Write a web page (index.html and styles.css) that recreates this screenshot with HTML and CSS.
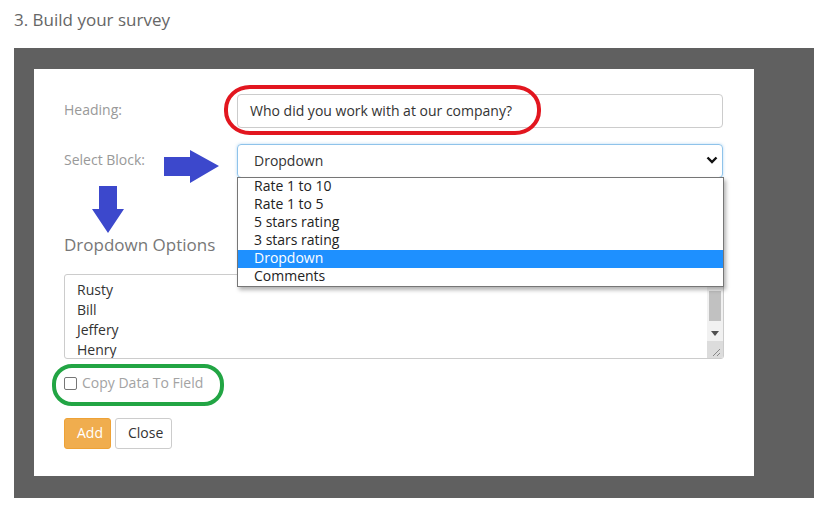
FILE: index.html
```html
<!DOCTYPE html>
<html>
<head>
<meta charset="utf-8">
<link rel="stylesheet" href="styles.css">
</head>
<body>
<div class="title">3. Build your survey</div>
<div class="backdrop">
  <div class="modal">
    <div class="row">
      <label class="lbl">Heading:</label>
      <div class="control input">Who did you work with at our company?</div>
    </div>
    <div class="row row-select">
      <label class="lbl">Select Block:</label>
      <div class="select-wrap">
        <div class="control select">
          <span>Dropdown</span>
          <svg class="chev" width="12" height="8" viewBox="0 0 12 8"><path d="M1.5 1.5 L6 6 L10.5 1.5" fill="none" stroke="#111" stroke-width="2.4"/></svg>
        </div>
        <ul class="list">
          <li>Rate 1 to 10</li>
          <li>Rate 1 to 5</li>
          <li>5 stars rating</li>
          <li>3 stars rating</li>
          <li class="sel">Dropdown</li>
          <li>Comments</li>
        </ul>
      </div>
    </div>
    <h4 class="sub">Dropdown Options</h4>
    <div class="textarea">
      <div class="lines">
        <div>Rusty</div>
        <div>Bill</div>
        <div>Jeffery</div>
        <div>Henry</div>
      </div>
      <div class="sb">
        <div class="sb-up"></div>
        <div class="sb-thumb"></div>
        <div class="sb-space"></div>
        <div class="sb-down"><svg width="8" height="5" viewBox="0 0 8 5"><path d="M0 0 H8 L4 5 Z" fill="#505050"/></svg></div>
        <div class="sb-corner"><svg width="15" height="15" viewBox="0 0 15 15"><path d="M13 6 L6 13 M13 10 L10 13" stroke="#888" stroke-width="1"/></svg></div>
      </div>
    </div>
    <div class="check-row">
      <span class="box"></span>
      <span class="check-lbl">Copy Data To Field</span>
    </div>
    <div class="btns">
      <button class="btn btn-add">Add</button>
      <button class="btn btn-close">Close</button>
    </div>

    <div class="mark mark-red"></div>
    <div class="mark mark-green"></div>
    <svg class="arrow arrow-right" width="58" height="36" viewBox="0 0 58 36"><path d="M1 8 H27 V1 L56 17 L27 34 V27 H1 Z" fill="#3c48cc"/></svg>
    <svg class="arrow arrow-down" width="34" height="49" viewBox="0 0 34 49"><path d="M8 1 H26 V24 H33 L17 48 L1 24 H8 Z" fill="#3c48cc"/></svg>
  </div>
</div>
</body>
</html>
```
FILE: styles.css
```css
* { box-sizing: border-box; }
body {
  margin: 0;
  background: #fff;
  font-family: "Open Sans", "Noto Sans", sans-serif;
  font-size: 14px;
  color: #333;
}
.title {
  height: 48px;
  padding: 9px 0 0 14px;
  font-size: 17px;
  color: #666;
  line-height: 22px;
}
.backdrop {
  margin-left: 14px;
  width: 800px;
  height: 450px;
  background: #606060;
  padding: 21px 60px 22px 20px;
}
.modal {
  position: relative;
  background: #fff;
  height: 407px;
  padding: 25px 31px 0 30px;
}
.row {
  display: flex;
  align-items: center;
}
.row-select { margin-top: 16px; }
.lbl {
  width: 173px;
  color: #999;
  font-size: 14px;
  line-height: 18px;
  padding-bottom: 3px;
}
.control {
  flex: 1;
  height: 34px;
  border: 1px solid #ccc;
  border-radius: 4px;
  padding: 0 12px 2px;
  display: flex;
  align-items: center;
  color: #333;
}
.select-wrap {
  flex: 1;
  position: relative;
}
.select {
  border-color: #8fc3ea;
  box-shadow: 0 0 3px rgba(102,175,233,.5);
  padding-left: 16px;
  justify-content: space-between;
  padding-right: 4px;
}
.list {
  position: absolute;
  left: 0;
  top: 33px;
  width: 487px;
  margin: 0;
  padding: 0;
  list-style: none;
  background: #fff;
  border: 1px solid #767676;
  box-shadow: 2px 3px 4px rgba(0,0,0,.3);
  z-index: 2;
  color: #222;
}
.list li {
  height: 18px;
  line-height: 16px;
  padding-left: 16px;
}
.list li.sel {
  background: #1e90ff;
  color: #fff;
}
.sub {
  margin: 56px 0 0;
  height: 24px;
  line-height: 22px;
  font-size: 17px;
  font-weight: normal;
  color: #777;
}
.textarea {
  margin-top: 16px;
  width: 660px;
  height: 85px;
  border: 1px solid #ccc;
  border-radius: 3px;
  display: flex;
  overflow: hidden;
}
.lines {
  flex: 1;
  padding: 5px 12px;
  line-height: 20px;
  color: #333;
}
.sb {
  width: 16px;
  background: #f1f1f1;
  display: flex;
  flex-direction: column;
}
.sb-up { height: 16px; }
.sb-thumb {
  height: 30px;
  margin: 0 2px;
  background: #c1c1c1;
}
.sb-space { height: 4px; }
.sb-down {
  height: 16px;
  display: flex;
  align-items: center;
  justify-content: center;
}
.sb-corner {
  flex: 1;
  background: #dcdcdc;
  display: flex;
  align-items: flex-end;
}
.check-row {
  margin-top: 14px;
  height: 20px;
  display: flex;
  align-items: center;
}
.box {
  width: 13px;
  height: 13px;
  border: 1px solid #767676;
  border-radius: 2px;
  margin-right: 5px;
}
.check-lbl { color: #a3a3a3; line-height: 18px; }
.btns {
  margin-top: 25px;
  display: flex;
  gap: 4px;
}
.btn {
  height: 31px;
  border-radius: 3px;
  font-family: inherit;
  font-size: 14px;
  padding: 0 12px 2px;
}
.btn-add {
  width: 47px;
  background: #f0ad4e;
  border: 1px solid #eea236;
  color: #fff;
}
.btn-close {
  width: 57px;
  background: #fff;
  border: 1px solid #ccc;
  color: #333;
}
.mark {
  position: absolute;
  z-index: 3;
}
.mark-red {
  left: 190px;
  top: 16px;
  width: 317px;
  height: 50px;
  border: 4px solid #e2161f;
  border-radius: 26px / 24px;
}
.mark-green {
  left: 18px;
  top: 295px;
  width: 172px;
  height: 42px;
  border: 4px solid #22a544;
  border-radius: 20px / 20px;
}
.arrow {
  position: absolute;
  z-index: 3;
}
.arrow-right { left: 129px; top: 80px; }
.arrow-down { left: 57px; top: 116px; }
```
